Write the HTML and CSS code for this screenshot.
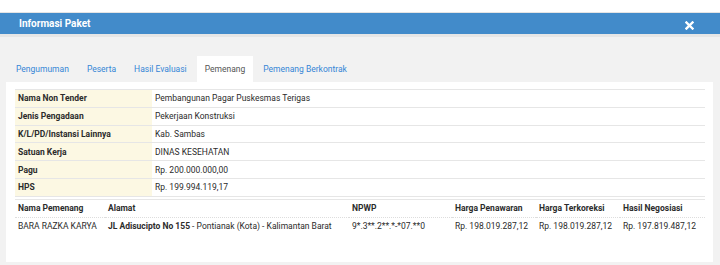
FILE: index.html
```html
<!DOCTYPE html>
<html lang="id">
<head>
    <meta charset="UTF-8">
    <title>Informasi Paket</title>
    <link rel="stylesheet" href="styles.css">
</head>
<body>
    <div class="modal">
        <div class="modal-header">
            <span class="modal-title">Informasi Paket</span>
            <span class="close">
                <svg width="9" height="9" viewBox="0 0 9 9"><path d="M1.5 1.5 L7.5 7.5 M7.5 1.5 L1.5 7.5" stroke="#fff" stroke-width="2.4" stroke-linecap="square"/></svg>
            </span>
        </div>
        <div class="modal-body">
            <ul class="tabs">
                <li><a href="#">Pengumuman</a></li>
                <li><a href="#">Peserta</a></li>
                <li><a href="#">Hasil Evaluasi</a></li>
                <li class="active"><a href="#">Pemenang</a></li>
                <li><a href="#">Pemenang Berkontrak</a></li>
            </ul>
            <div class="panel">
                <table class="info">
                    <tr><th>Nama Non Tender</th><td>Pembangunan Pagar Puskesmas Terigas</td></tr>
                    <tr><th>Jenis Pengadaan</th><td>Pekerjaan Konstruksi</td></tr>
                    <tr><th>K/L/PD/Instansi Lainnya</th><td>Kab. Sambas</td></tr>
                    <tr><th>Satuan Kerja</th><td>DINAS KESEHATAN</td></tr>
                    <tr><th>Pagu</th><td>Rp. 200.000.000,00</td></tr>
                    <tr><th>HPS</th><td>Rp. 199.994.119,17</td></tr>
                </table>
                <table class="winner">
                    <tr>
                        <th class="col-name">Nama Pemenang</th>
                        <th class="col-addr">Alamat</th>
                        <th class="col-npwp">NPWP</th>
                        <th class="col-price">Harga Penawaran</th>
                        <th class="col-price">Harga Terkoreksi</th>
                        <th>Hasil Negosiasi</th>
                    </tr>
                    <tr>
                        <td>BARA RAZKA KARYA</td>
                        <td><b>JL Adisucipto No 155</b> - Pontianak (Kota) - Kalimantan Barat</td>
                        <td>9*.3**.2**.*-*07.**0</td>
                        <td>Rp. 198.019.287,12</td>
                        <td>Rp. 198.019.287,12</td>
                        <td>Rp. 197.819.487,12</td>
                    </tr>
                </table>
            </div>
        </div>
    </div>
</body>
</html>
```

FILE: styles.css
```css
body {
    margin: 0;
    background: #fff;
    font-family: Roboto, "Liberation Sans", Arial, sans-serif;
    font-size: 8.5px;
    color: #2b2b2b;
}
.modal {
    margin-top: 12px;
    border-top: 1px solid #e4e4e4;
}
.modal-header {
    background: #428bca;
    height: 21px;
    display: flex;
    align-items: center;
    justify-content: space-between;
    padding: 0 26px 0 19px;
    border-bottom: 3px solid #e6e6e6;
}
.modal-title {
    color: #fff;
    font-weight: 700;
    font-size: 10px;
}
.close {
    display: flex;
    margin-top: 3px;
}
.modal-body {
    background: #f2f2f2;
    padding: 19px 7px 0 6px;
    height: 228px;
    box-sizing: border-box;
}
.tabs {
    list-style: none;
    margin: 0 0 0 2px;
    padding: 0;
    display: flex;
}
.tabs li {
    margin-right: 2px;
}
.tabs a {
    display: block;
    height: 26px;
    line-height: 26px;
    padding: 0 8px;
    color: #3586d6;
    text-decoration: none;
}
.tabs .active a {
    background: #fff;
    color: #555;
}
.panel {
    background: #fff;
    padding: 7px 8px 0 9px;
    height: 180px;
    box-sizing: border-box;
}
table {
    width: 100%;
    border-collapse: collapse;
}
.info tr {
    border-top: 1px solid #e6e6e6;
}
.info tr:last-child {
    border-bottom: 1px solid #e6e6e6;
}
.info th, .info td {
    height: 16.8px;
    padding: 0 3px;
    text-align: left;
    white-space: nowrap;
}
.info th {
    width: 131px;
    background: #fcf8e3;
    font-weight: 700;
}
.winner {
    margin-top: 2px;
    border-top: 1px solid #e6e6e6;
    table-layout: fixed;
}
.winner th, .winner td {
    height: 17px;
    padding: 0 3px;
    text-align: left;
    white-space: nowrap;
}
.winner th {
    border-bottom: 1px dotted #ddd;
}
.col-name {
    width: 84px;
}
.col-addr {
    width: 238px;
}
.col-npwp {
    width: 97px;
}
.col-price {
    width: 78px;
}
```
